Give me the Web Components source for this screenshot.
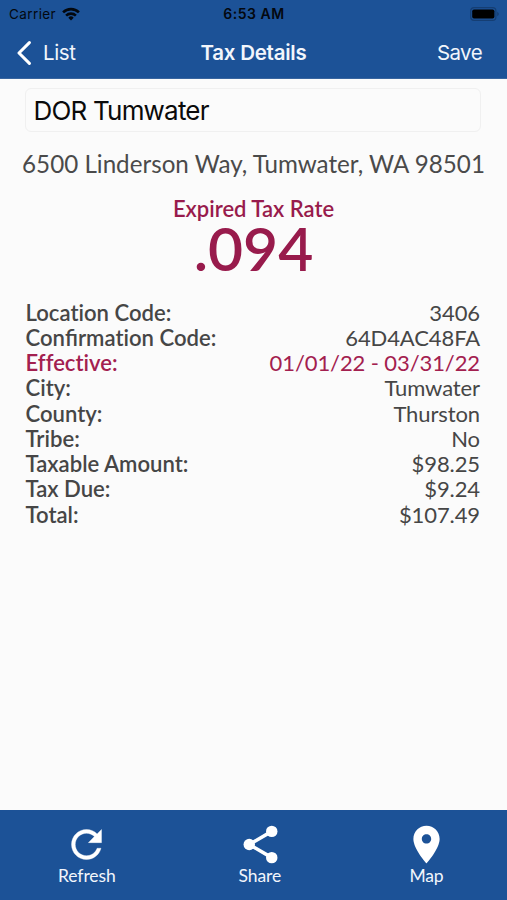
<!DOCTYPE html>
<html lang="en">
<head>
<meta charset="utf-8">
<title>Tax Details</title>
<style>
    body {
        margin: 0;
        background: #fbfbfb;
    }
</style>
</head>
<body>
<tax-app></tax-app>

<script>
class StatusBar extends HTMLElement {
    constructor() {
        super();
        this.attachShadow({ mode: 'open' });
        this.shadowRoot.innerHTML = `
        <style>
            :host {
                display: grid;
                grid-template-columns: 1fr auto 1fr;
                align-items: center;
                height: 27px;
                padding: 0 8px;
                color: #03080f;
                font: 13.5px Inter, "Liberation Sans", sans-serif;
            }
            .carrier { display: flex; align-items: center; gap: 6px; padding-left: 1px; letter-spacing: .4px; }
            .time { font-weight: 600; font-size: 14px; letter-spacing: .5px; padding-left: 1px; }
            .battery { justify-self: end; }
            svg { display: block; }
        </style>
        <span class="carrier"><span>Carrier</span>
            <svg width="18" height="14" viewBox="0 0 18 14">
                <g fill="none" stroke="#03080f" stroke-width="2.6">
                    <path d="M1.1 5.4a11.2 11.2 0 0 1 15.8 0"/>
                    <path d="M4.1 8.6a7 7 0 0 1 9.8 0"/>
                </g>
                <path d="M9 13.4 6.3 10.7a3.8 3.8 0 0 1 5.4 0z" fill="#03080f"/>
            </svg>
        </span>
        <span class="time">6:53 AM</span>
        <svg class="battery" width="29" height="14" viewBox="0 0 29 14">
            <rect x=".7" y=".7" width="25.2" height="12.6" rx="3.4" fill="none" stroke="#153e73" stroke-width="1.2"/>
            <rect x="2.2" y="2.4" width="22.2" height="9.2" rx="1.8" fill="#000"/>
            <path d="M27.2 4.8q1.6.7 1.6 2.2t-1.6 2.2z" fill="#153e73"/>
        </svg>
        `;
    }
}

class NavBar extends HTMLElement {
    constructor() {
        super();
        this.attachShadow({ mode: 'open' });
        this.shadowRoot.innerHTML = `
        <style>
            :host {
                display: grid;
                grid-template-columns: 1fr auto 1fr;
                align-items: center;
                height: 51px;
                padding: 0 17px;
                color: #f2f6fc;
                font: 20.5px Inter, "Liberation Sans", sans-serif;
                letter-spacing: -.35px;
            }
            .back { display: flex; align-items: center; gap: 12px; }
            .title { font-weight: 600; letter-spacing: -.25px; }
            .action { justify-self: end; padding-right: 8px; letter-spacing: -.6px; }
            svg { display: block; }
        </style>
        <span class="back">
            <svg width="14" height="24" viewBox="0 0 14 24">
                <path d="M12.4 1.6 2 12l10.4 10.4" fill="none" stroke="#fff" stroke-width="3" stroke-linecap="round" stroke-linejoin="round"/>
            </svg>
            <slot name="back"></slot>
        </span>
        <span class="title"><slot></slot></span>
        <span class="action"><slot name="action"></slot></span>
        `;
    }
}

class TaxRate extends HTMLElement {
    constructor() {
        super();
        this.attachShadow({ mode: 'open' });
        this.shadowRoot.innerHTML = `
        <style>
            :host {
                display: block;
                text-align: center;
                color: #981b4c;
                font-weight: 600;
            }
            .label { font-size: 22px; line-height: 26px; }
            .rate { font-size: 60.5px; line-height: 52px; }
        </style>
        <div class="label"><slot></slot></div>
        <div class="rate"><slot name="rate"></slot></div>
        `;
    }
}

class DetailRow extends HTMLElement {
    constructor() {
        super();
        this.attachShadow({ mode: 'open' });
        this.shadowRoot.innerHTML = `
        <style>
            :host {
                display: flex;
                justify-content: space-between;
                font-size: 22px;
                line-height: 25.25px;
                color: #464646;
            }
            :host([expired]) { color: #a3204f; }
            .label { font-size: 22.1px; font-weight: 600; font-variant-ligatures: no-common-ligatures; }
            .value { letter-spacing: -.1px; }
        </style>
        <span class="label"><slot name="label"></slot></span>
        <span class="value"><slot></slot></span>
        `;
    }
}

const ICONS = {
    refresh: '<path d="M17.65 6.35C16.2 4.9 14.21 4 12 4c-4.42 0-7.99 3.58-7.99 8s3.57 8 7.99 8c3.73 0 6.84-2.55 7.73-6h-2.08c-.82 2.33-3.04 4-5.65 4-3.31 0-6-2.69-6-6s2.69-6 6-6c1.66 0 3.14.69 4.22 1.78L13 11h7V4z" stroke="#fff" stroke-width=".2"/>',
    share: '<path d="M18 5 6 12l12 7" fill="none" stroke="#fff" stroke-width="1.9"/><circle cx="18" cy="5" r="3.05"/><circle cx="6" cy="12" r="3.05"/><circle cx="18" cy="19" r="3.05"/>',
    map: '<path d="M12 2C8.13 2 5 5.13 5 9c0 5.25 7 13 7 13s7-7.75 7-13c0-3.87-3.13-7-7-7zm0 9.5c-1.38 0-2.5-1.12-2.5-2.5s1.12-2.5 2.5-2.5 2.5 1.12 2.5 2.5-1.12 2.5-2.5 2.5z"/>'
};

class TabButton extends HTMLElement {
    constructor() {
        super();
        this.attachShadow({ mode: 'open' });
    }
    connectedCallback() {
        this.shadowRoot.innerHTML = `
        <style>
            :host {
                display: flex;
                flex-direction: column;
                align-items: center;
                color: #f2f6fc;
                font-size: 17.5px;
                line-height: 22px;
                letter-spacing: -.1px;
            }
            svg { display: block; margin-bottom: -2px; }
            :host([icon="share"]) svg { margin-left: 2px; }
        </style>
        <svg width="45" height="45" viewBox="0 0 24 24" fill="#fff">${ICONS[this.getAttribute('icon')]}</svg>
        <span><slot></slot></span>
        `;
    }
}

class TaxApp extends HTMLElement {
    constructor() {
        super();
        this.attachShadow({ mode: 'open' });
        this.render();
    }
    render() {
        this.shadowRoot.innerHTML = this.getTemplate();
    }
    getTemplate() {
        return `
        <header>
            <status-bar></status-bar>
            <nav-bar>
                <span slot="back">List</span>
                Tax Details
                <span slot="action">Save</span>
            </nav-bar>
        </header>
        <main>
            <div class="name">DOR Tumwater</div>
            <div class="address">6500 Linderson Way, Tumwater, WA 98501</div>
            <tax-rate>Expired Tax Rate<span slot="rate">.094</span></tax-rate>
            <section>
                <detail-row><span slot="label">Location Code:</span>3406</detail-row>
                <detail-row><span slot="label">Con<span class="lig">fi</span>rmation Code:</span>64D4AC48FA</detail-row>
                <detail-row expired><span slot="label">Effective:</span>01/01/22 - 03/31/22</detail-row>
                <detail-row><span slot="label">City:</span>Tumwater</detail-row>
                <detail-row><span slot="label">County:</span>Thurston</detail-row>
                <detail-row><span slot="label">Tribe:</span>No</detail-row>
                <detail-row><span slot="label">Taxable Amount:</span>$98.25</detail-row>
                <detail-row><span slot="label">Tax Due:</span>$9.24</detail-row>
                <detail-row><span slot="label">Total:</span>$107.49</detail-row>
            </section>
        </main>
        <footer>
            <tab-button icon="refresh">Refresh</tab-button>
            <tab-button icon="share">Share</tab-button>
            <tab-button icon="map">Map</tab-button>
        </footer>
        ${this.getStyles()}
        `;
    }
    getStyles() {
        return `
        <style>
            :host {
                --bar-color: #1c5297;
                display: flex;
                flex-direction: column;
                height: 900px;
                font-family: Lato, "Open Sans", sans-serif;
                background: #fbfbfb;
            }
            header {
                height: 79px;
                box-sizing: border-box;
                background: var(--bar-color);
                border-bottom: 1px solid #38659f;
            }
            main {
                flex: 1;
                padding-top: 9px;
            }
            .name {
                height: 44px;
                box-sizing: border-box;
                margin: 0 26px 0 25px;
                padding-left: 7.5px;
                border: 1px solid #f0f0f0;
                border-radius: 6px;
                font: 26px/44px Inter, "Liberation Sans", sans-serif;
                letter-spacing: -.8px;
                color: #0a0a0a;
            }
            .address {
                margin-top: 17px;
                text-align: center;
                font-size: 24.2px;
                line-height: 30px;
                white-space: nowrap;
                color: #4a4a4a;
            }
            .lig { font-variant-ligatures: common-ligatures; }
            tax-rate { margin-top: 17px; }
            section { padding: 25.5px 27px 0 25.5px; }
            footer {
                height: 90px;
                box-sizing: border-box;
                padding: 12px 58px 0 58px;
                display: flex;
                justify-content: space-between;
                background: var(--bar-color);
            }
        </style>
        `;
    }
}

customElements.define('status-bar', StatusBar);
customElements.define('nav-bar', NavBar);
customElements.define('tax-rate', TaxRate);
customElements.define('detail-row', DetailRow);
customElements.define('tab-button', TabButton);
customElements.define('tax-app', TaxApp);
</script>
</body>
</html>
